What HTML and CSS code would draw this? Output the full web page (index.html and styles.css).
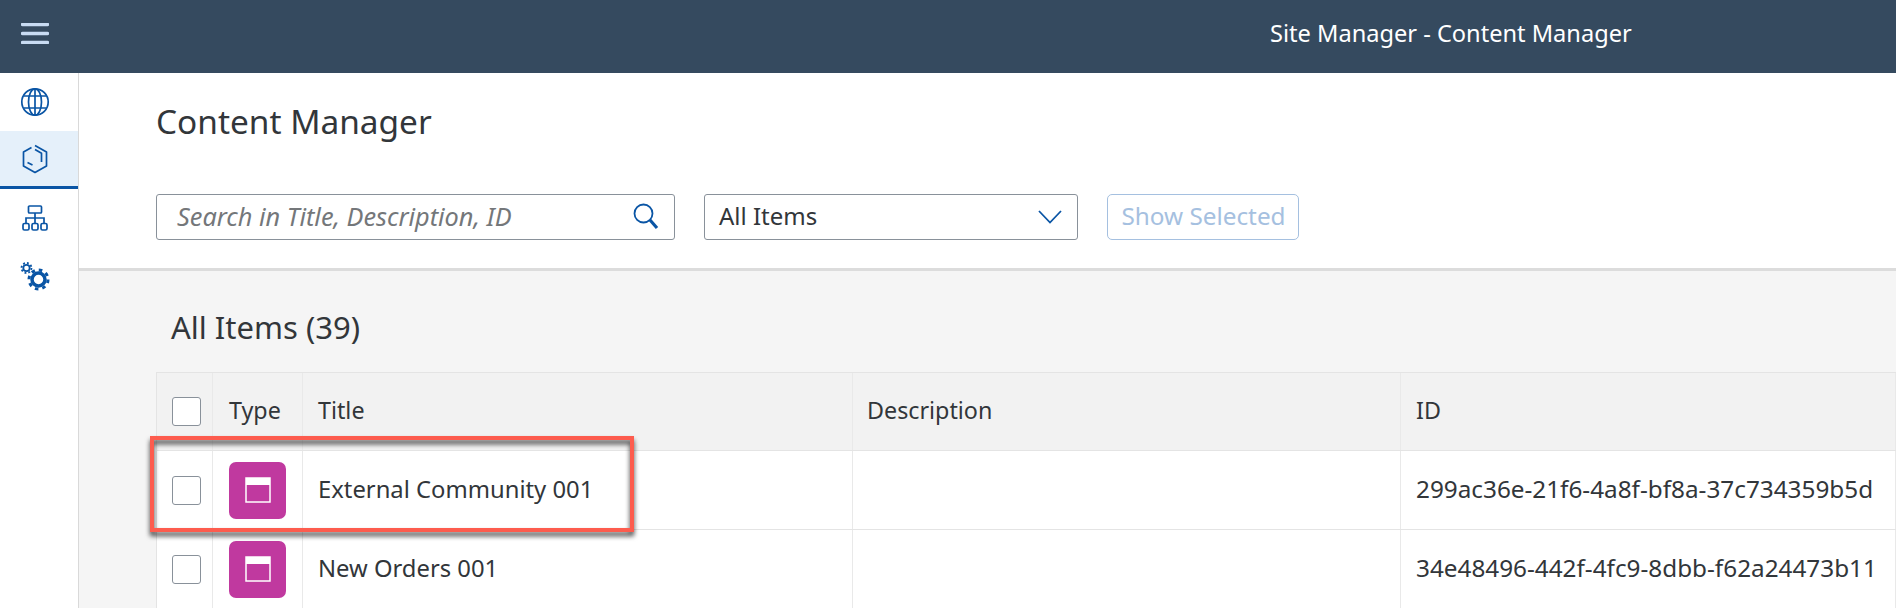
FILE: index.html
```html
<!DOCTYPE html>
<html lang="en">
<head>
    <meta charset="UTF-8">
    <meta name="viewport" content="width=device-width, initial-scale=1.0">
    <title>Site Manager - Content Manager</title>
    <link rel="stylesheet" href="styles.css">
</head>
<body>
    <header class="topbar">
        <button class="menuButton" aria-label="Menu">
            <svg width="28" height="21" viewBox="0 0 28 21"><path d="M1.500 1.500h25M1.500 10.500h25M1.500 19.500h25" fill="none" stroke="#c9dcf3" stroke-width="3.500" stroke-linecap="round"/></svg>
        </button>
        <div class="topbarTitle">Site Manager - Content Manager</div>
    </header>
    <div class="page">
        <nav class="sidebar">
            <div class="navItem">
                <svg width="30" height="30" viewBox="0 0 30 30" fill="none" stroke="#0a55a5" stroke-width="1.700"><circle cx="15" cy="15" r="13.200"/><ellipse cx="15" cy="15" rx="6.500" ry="13.200"/><path d="M3.600 9h22.800M3.600 21h22.800M15 2v26"/></svg>
            </div>
            <div class="navItem navItemActive">
                <svg width="26" height="30" viewBox="0 0 26 30" fill="none" stroke="#0a55a5" stroke-width="1.700" stroke-linejoin="round"><path d="M13 1.500l11.500 6.500v14l-11.500 6.500-11.500-6.500v-14l8-4.500"/><path d="M13 5.500l6.500 3.800v8.700"/><path d="M5.500 18.500l5 2.600"/></svg>
            </div>
            <div class="navItem">
                <svg width="26" height="26" viewBox="0 0 26 26" fill="none" stroke="#0a55a5" stroke-width="1.700"><rect x="6.500" y="1" width="13" height="7" rx="1"/><path d="M13 8v5M4 18v-5h18v5M13 13v5"/><rect x="1" y="18.500" width="6" height="6.500" rx="1.500"/><rect x="10" y="18.500" width="6" height="6.500" rx="1.500"/><rect x="19" y="18.500" width="6" height="6.500" rx="1.500"/></svg>
            </div>
            <div class="navItem">
                <svg width="30" height="30" viewBox="0 0 30 30" fill="none" stroke="#0a55a5"><circle cx="6.500" cy="7" r="3.200" stroke-width="1.800"/><circle cx="6.500" cy="7" r="5" stroke-width="1.800" stroke-dasharray="1.900 2"/><circle cx="18.500" cy="18.500" r="6.500" stroke-width="3.500"/><circle cx="18.500" cy="18.500" r="9.500" stroke-width="3" stroke-dasharray="3.500 3.960"/></svg>
            </div>
        </nav>
        <main class="content">
            <section class="shell">
                <h1 class="pageTitle">Content Manager</h1>
                <div class="toolbar">
                    <div class="searchBox">
                        <span class="searchText">Search in Title, Description, ID</span>
                        <svg width="26" height="28" viewBox="0 0 26 28" fill="none" stroke="#0a55a5"><circle cx="10.500" cy="10.500" r="9" stroke-width="1.800"/><path d="M17 17l7 8" stroke-width="3.200"/></svg>
                    </div>
                    <div class="selectBox">
                        <span class="selectText">All Items</span>
                        <svg width="24" height="14" viewBox="0 0 24 14" fill="none" stroke="#0a55a5" stroke-width="1.800"><path d="M1 1l11 11.500 11-11.500"/></svg>
                    </div>
                    <button class="showSelected">Show Selected</button>
                </div>
            </section>
            <section class="listArea">
                <h2 class="listTitle">All Items (39)</h2>
                <div class="itemTable">
                    <div class="tableRow tableHead">
                        <div class="cell"><span class="checkbox checkboxHead"></span></div>
                        <div class="cell textCell">Type</div>
                        <div class="cell textCell">Title</div>
                        <div class="cell textCell">Description</div>
                        <div class="cell textCell">ID</div>
                    </div>
                    <div class="tableRow">
                        <div class="cell"><span class="checkbox"></span></div>
                        <div class="cell">
                            <span class="typeIcon"><svg width="26" height="26" viewBox="0 0 26 26" fill="none" stroke="#fff"><rect x="1" y="1" width="24" height="24" stroke-width="1.500"/><path d="M1 4.500h24" stroke-width="7"/></svg></span>
                        </div>
                        <div class="cell textCell">External Community 001</div>
                        <div class="cell"></div>
                        <div class="cell textCell idCell">299ac36e-21f6-4a8f-bf8a-37c734359b5d</div>
                    </div>
                    <div class="tableRow">
                        <div class="cell"><span class="checkbox"></span></div>
                        <div class="cell">
                            <span class="typeIcon"><svg width="26" height="26" viewBox="0 0 26 26" fill="none" stroke="#fff"><rect x="1" y="1" width="24" height="24" stroke-width="1.500"/><path d="M1 4.500h24" stroke-width="7"/></svg></span>
                        </div>
                        <div class="cell textCell">New Orders 001</div>
                        <div class="cell"></div>
                        <div class="cell textCell idCell">34e48496-442f-4fc9-8dbb-f62a24473b11</div>
                    </div>
                </div>
            </section>
        </main>
    </div>
    <div class="callout"></div>
</body>
</html>
```

FILE: styles.css
```css
html, body {
    height: 100%;
}
body {
    margin: 0;
    height: 608px;
    overflow: hidden;
    position: relative;
    font-family: "Noto Sans", Arial, sans-serif;
    color: #32363a;
    background: #fff;
}
.topbar {
    height: 73px;
    background-color: #354a5f;
    display: flex;
    align-items: center;
    position: relative;
}
.menuButton {
    border: none;
    background: none;
    padding: 0;
    margin-left: 21px;
    margin-top: -7px;
    display: flex;
}
.topbarTitle {
    margin-left: 1221px;
    margin-top: -7px;
    color: #fff;
    font-size: 23.6px;
    white-space: nowrap;
}
.page {
    display: flex;
    height: 535px;
}
.sidebar {
    width: 78px;
    flex-shrink: 0;
    border-right: 1px solid #d9d9d9;
    background: #fff;
}
.navItem {
    height: 58px;
    box-sizing: border-box;
    padding-right: 8px;
    display: flex;
    align-items: center;
    justify-content: center;
}
.navItemActive {
    background-color: #e5f0fa;
    border-bottom: 3px solid #0a55a5;
}
.content {
    flex: 1;
    min-width: 0;
    background: #f5f5f5;
}
.shell {
    height: 198px;
    box-sizing: border-box;
    background: #fff;
    border-bottom: 3px solid #dcdcdc;
    padding: 24px 0 0 77px;
}
.pageTitle {
    margin: 0;
    font-size: 33.4px;
    font-weight: 400;
    line-height: 48px;
}
.toolbar {
    display: flex;
    gap: 29px;
    margin-top: 49px;
}
.searchBox, .selectBox {
    height: 46px;
    box-sizing: border-box;
    border: 1px solid #89919a;
    border-radius: 3px;
    background: #fff;
    display: flex;
    align-items: center;
    justify-content: space-between;
}
.searchBox {
    width: 519px;
    padding: 0 15px 0 20px;
}
.searchText {
    font-style: italic;
    font-size: 25.300px;
    color: #74777a;
    white-space: nowrap;
    padding-bottom: 2px;
}
.selectBox {
    width: 374px;
    padding: 0 15px 0 14px;
    font-size: 24px;
}
.selectText {
    padding-bottom: 4px;
}
.showSelected {
    width: 192px;
    height: 46px;
    padding: 0 0 3px 1px;
    border: 1px solid #a5c0e0;
    border-radius: 5px;
    background: #fff;
    color: #a5c0e0;
    font-family: inherit;
    font-size: 24.300px;
}
.listArea {
    padding: 0 0 0 77px;
}
.listTitle {
    margin: 0;
    padding: 37px 0 0 15px;
    height: 101px;
    box-sizing: border-box;
    font-size: 31px;
    font-weight: 400;
    line-height: 38px;
}
.itemTable {
    border-left: 1px solid #e4e4e4;
    border-top: 1px solid #e4e4e4;
}
.tableRow {
    display: grid;
    grid-template-columns: 56px 90px 550px 548px 1fr;
    height: 79px;
    box-sizing: border-box;
    background: #fff;
    border-bottom: 1px solid #e4e4e4;
}
.tableHead {
    height: 78px;
    background: #f2f2f2;
}
.cell {
    display: flex;
    align-items: center;
    box-sizing: border-box;
    padding-left: 15px;
    border-right: 1px solid #e9e9e9;
    white-space: nowrap;
}
.cell:nth-child(2) {
    padding-left: 16px;
}
.cell:nth-child(4) {
    padding-left: 14px;
}
.textCell {
    font-size: 23.800px;
    padding-bottom: 3px;
}
.tableHead .textCell {
    font-size: 23.300px;
}
.tableRow .idCell {
    font-size: 24.300px;
}
.checkbox {
    width: 29px;
    height: 29px;
    box-sizing: border-box;
    border: 1px solid #89919a;
    border-radius: 3px;
    background: #fff;
}
.typeIcon {
    width: 57px;
    height: 57px;
    border-radius: 7px;
    background-color: #c0399f;
    display: flex;
    align-items: center;
    justify-content: center;
}
/* red highlight drawn over the first row */
.callout {
    position: absolute;
    left: 150px;
    top: 436px;
    width: 484px;
    height: 96px;
    box-sizing: border-box;
    border: 4px solid #fd5c4e;
    filter: drop-shadow(0 4px 2.5px rgba(0, 0, 0, 0.75));
}
```
